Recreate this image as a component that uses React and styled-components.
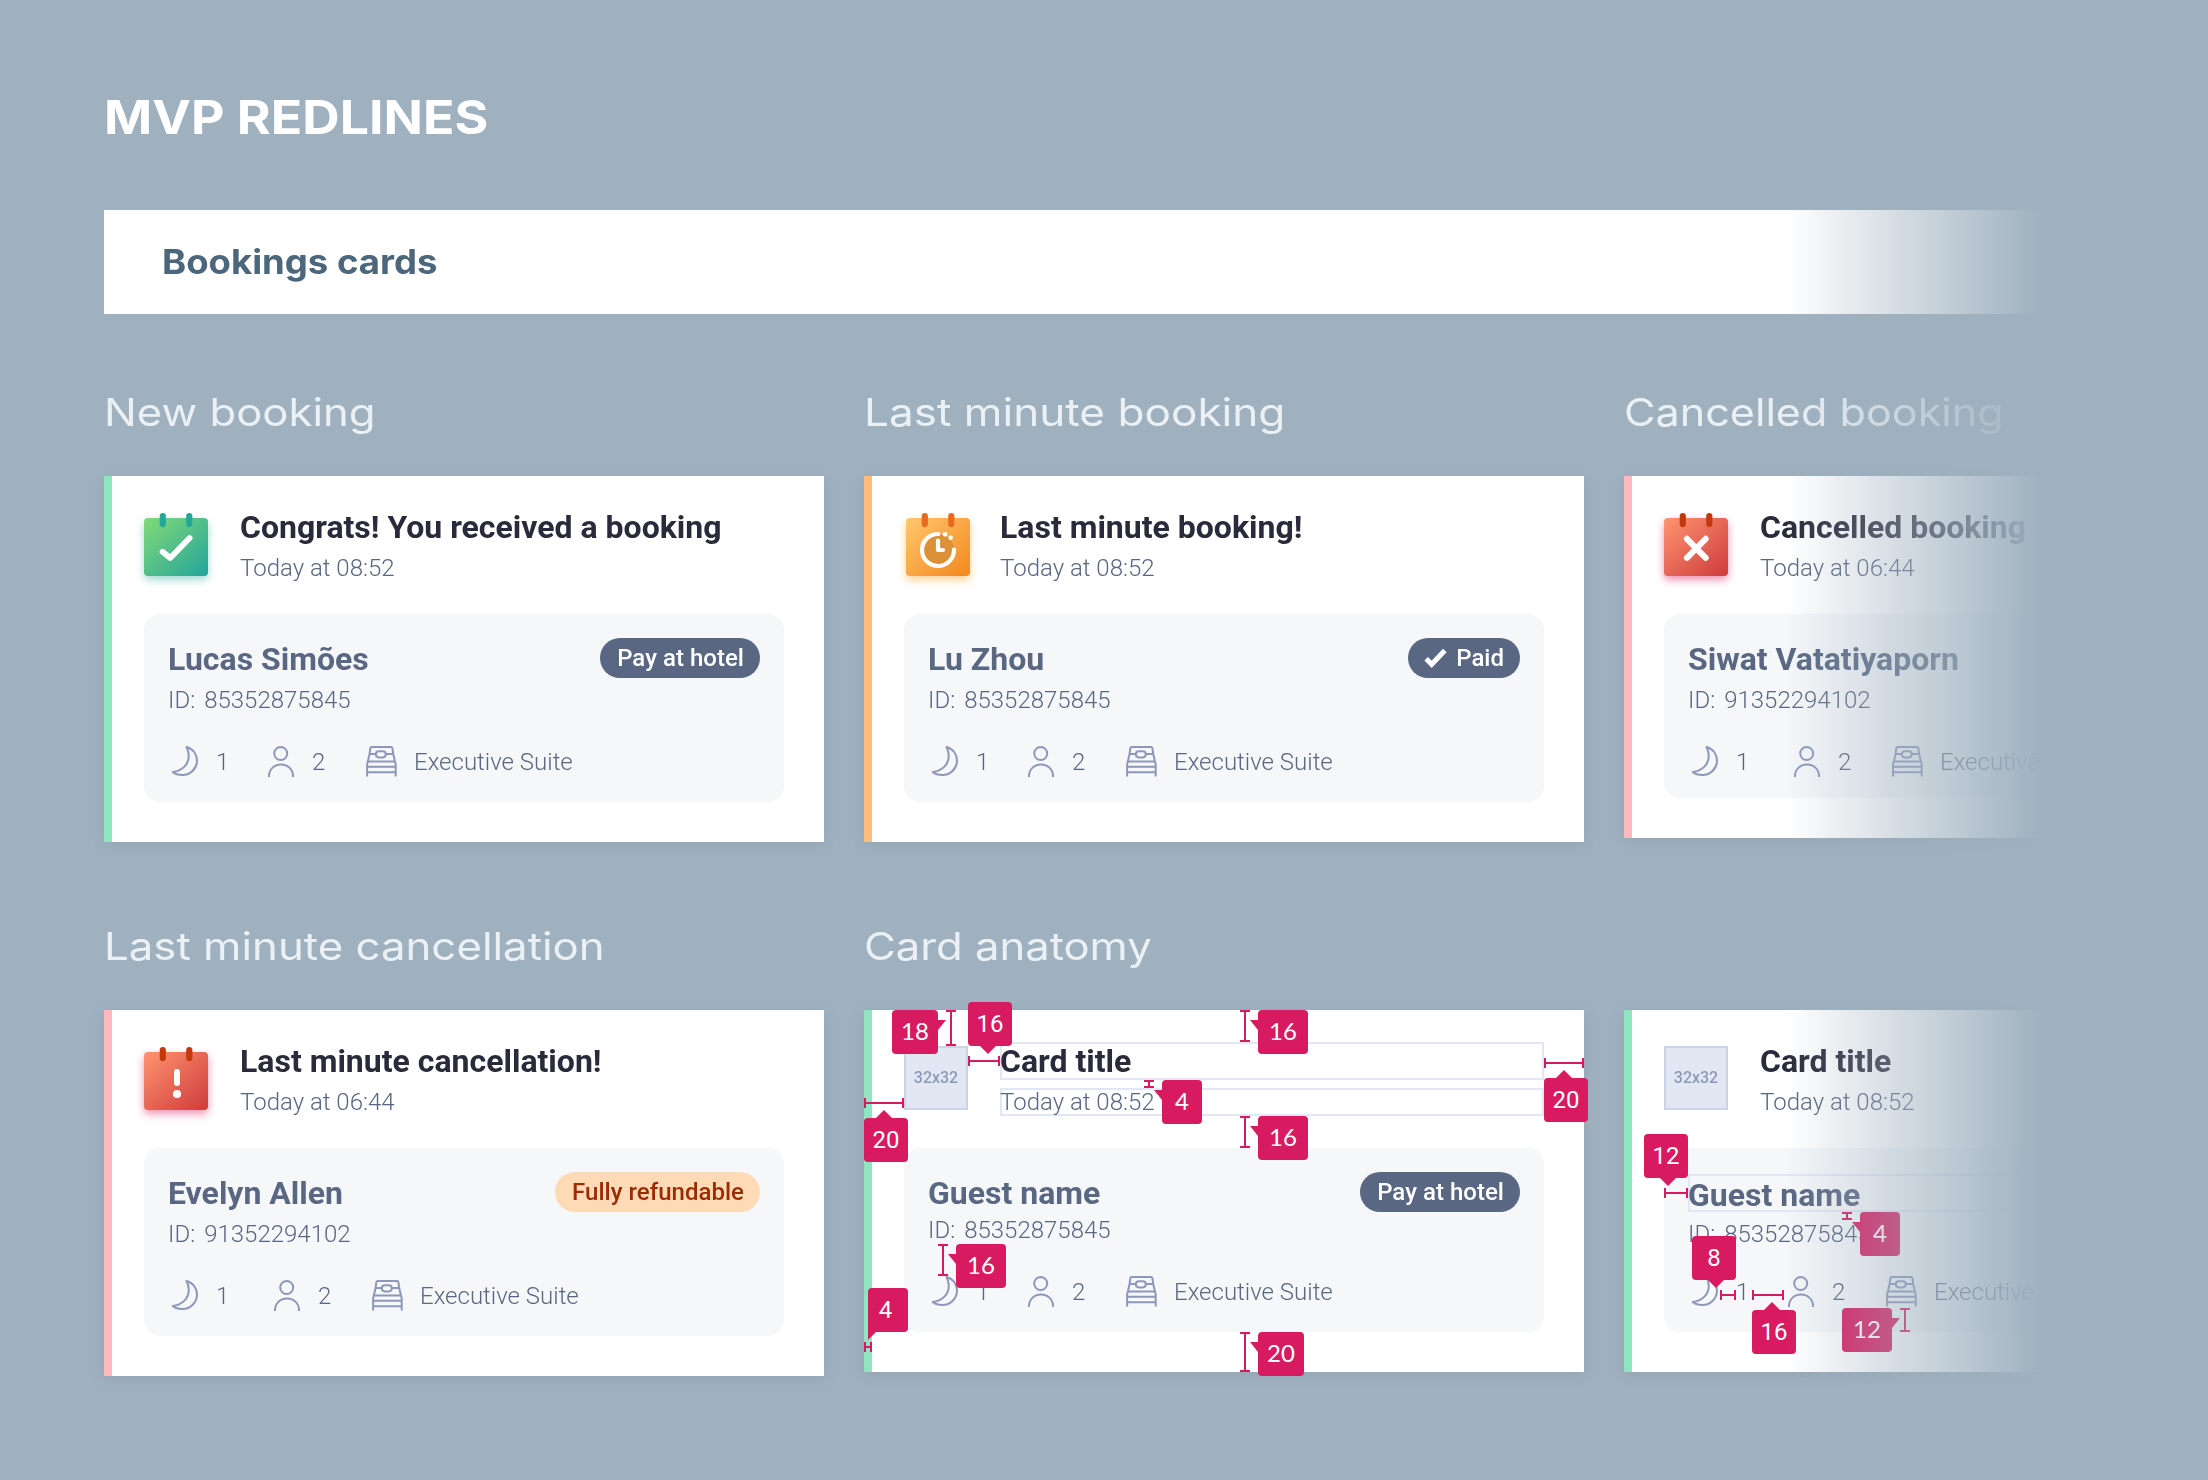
import React from "react";
import styled, { createGlobalStyle, css } from "styled-components";

const GlobalStyle = createGlobalStyle`
  *, *::before, *::after { box-sizing: border-box; }
  html, body { margin: 0; background: #9fb1bf; }
`;

const display = `Inter, "Open Sans", sans-serif`;
const body = `Roboto, "Liberation Sans", sans-serif`;

const Page = styled.main`
  width: 2208px;
  height: 1480px;
  overflow: hidden;
  background: #9fb1bf;
  font-family: ${body};
`;

const Board = styled.div`
  height: 100%;
  padding: 88px 0 0 104px;
  mask-image: linear-gradient(90deg, #000 1785px, transparent 2042px);
`;

const wide = css`
  width: max-content;
  white-space: nowrap;
  transform: scaleX(${(p) => p.$stretch});
  transform-origin: 0 50%;
`;

const PageTitle = styled.h1`
  margin: 0 0 64px;
  font: 700 47px/58px ${display};
  color: #fff;
  ${wide}
`;

const Banner = styled.header`
  display: flex;
  align-items: center;
  height: 104px;
  padding-left: 58px;
  margin-bottom: 74px;
  background: #fff;
`;

const BannerTitle = styled.h2`
  margin: 0;
  font: 700 34px/42px ${display};
  color: #4c667b;
  ${wide}
`;

const Grid = styled.div`
  display: grid;
  grid-template-columns: repeat(3, 720px);
  column-gap: 40px;
  row-gap: 80px;
  align-items: start;
`;

const Cell = styled.section`
  display: flex;
  flex-direction: column;
`;

const SectionTitle = styled.h3`
  height: 48px;
  margin: 0 0 40px;
  font: 400 38.5px/48px ${display};
  color: #ebf0f4;
  ${wide}
`;

const Card = styled.article`
  position: relative;
  padding: 32px 40px 40px 32px;
  border-left: 8px solid ${(p) => p.$accent};
  background: #fff;
  box-shadow: 0 3px 12px rgba(84, 106, 126, 0.16);
`;

const CardHead = styled.div`
  display: flex;
  height: 74px;
  margin-bottom: 32px;
`;

const Media = styled.div`
  flex: none;
  width: 64px;
  height: 64px;
  margin: 4px ${(p) => 32 - (p.$shift || 0)}px 0 ${(p) => p.$shift || 0}px;
`;

const CalendarSvg = styled.svg`
  display: block;
  overflow: visible;
`;

const CalendarBody = styled.rect`
  filter: drop-shadow(0 4px 4px ${(p) => p.$shadow});
`;

const Placeholder = styled.div`
  display: flex;
  align-items: center;
  justify-content: center;
  width: 64px;
  height: 64px;
  border: 2px solid #c9d4ea;
  background: #e2e7f4;
  font: 500 16px/18px ${body};
  color: #8f98b8;
`;

const HeadText = styled.div`
  display: flex;
  flex: 1;
  min-width: 0;
  flex-direction: column;
  gap: 8px;
`;

const outline = css`
  box-shadow: inset 0 0 0 2px #e2e7f5;
`;

const CardTitle = styled.div`
  font: 700 32px/38px ${body};
  white-space: nowrap;
  color: #2b2a3b;
  ${(p) => p.$outlined && outline}
`;

const CardTime = styled.div`
  font: 300 24px/28px ${body};
  white-space: nowrap;
  color: #596782;
  ${(p) => p.$outlined && outline}
`;

const Panel = styled.div`
  display: flex;
  flex-direction: column;
  padding: 24px 24px ${(p) => p.$bottom}px;
  border-radius: 16px;
  background: #f5f7f9;
`;

const GuestRow = styled.div`
  display: flex;
  justify-content: space-between;
  align-items: flex-start;
  height: 40px;
`;

const GuestName = styled.div`
  height: 38px;
  margin-top: 2px;
  padding-top: ${(p) => (p.$outlined ? 2 : 0)}px;
  flex: ${(p) => (p.$outlined ? 1 : "none")};
  font: 700 32px/38px ${body};
  white-space: nowrap;
  color: #596782;
  ${(p) => p.$outlined && outline}
`;

const BookingId = styled.div`
  display: flex;
  gap: 9px;
  margin: ${(p) => p.$top}px 0 ${(p) => p.$gap}px;
  font: 300 24px/28px ${body};
  color: #596782;
`;

const pillTones = {
  slate: css`
    background: #596782;
    color: #fff;
  `,
  peach: css`
    background: #ffdab7;
    color: #9b2c00;
  `,
};

const Pill = styled.span`
  display: flex;
  align-items: center;
  gap: 9px;
  height: 40px;
  padding: 0 16px 0 ${(p) => (p.$ticked ? 16 : 17)}px;
  border-radius: 20px;
  font: 500 24px/28px ${body};
  letter-spacing: ${(p) => (p.$ticked ? 0 : 0.03)}px;
  white-space: nowrap;
  ${(p) => pillTones[p.$tone]}
`;

const Details = styled.div`
  display: flex;
  height: 32px;
`;

const Detail = styled.div`
  display: flex;
  flex: none;
  align-items: center;
  gap: 16px;
  width: ${(p) => (p.$width ? `${p.$width}px` : "auto")};
  font: 300 24px/28px ${body};
  white-space: nowrap;
  color: #596782;
`;

const LineIcon = styled.svg.attrs({ width: 32, height: 32, viewBox: "0 0 32 32" })`
  flex: none;
  fill: none;
  stroke: #8d97ba;
  stroke-width: 2;
  stroke-linejoin: round;
`;

const RED = "#d81b60";

const Redline = styled.span`
  position: absolute;
  left: ${(p) => p.$x - 8}px;
  top: ${(p) => p.$y}px;
  width: ${(p) => (p.$vertical ? 10 : p.$size)}px;
  height: ${(p) => (p.$vertical ? p.$size : 10)}px;
  border: solid ${RED};
  border-width: ${(p) => (p.$vertical ? "2px 0" : "0 2px")};
  &::before {
    content: "";
    position: absolute;
    background: ${RED};
    ${(p) =>
      p.$vertical
        ? "left: 4px; top: 0; bottom: 0; width: 2px;"
        : "top: 4px; left: 0; right: 0; height: 2px;"}
  }
`;

const pointers = {
  left: "left: -8px; top: 10px; width: 8px; height: 10px; clip-path: polygon(0 0, 100% 0, 100% 100%);",
  right: "right: -8px; top: 10px; width: 8px; height: 10px; clip-path: polygon(0 0, 100% 0, 0 100%);",
  corner: "left: 0; bottom: -8px; width: 8px; height: 12px; clip-path: polygon(0 0, 100% 33%, 0 100%);",
};

const pointer = (p) => {
  if (p.$dir === "down")
    return `left: ${p.$tip - 8}px; bottom: -8px; width: 16px; height: 8px; clip-path: polygon(0 0, 100% 0, 50% 100%);`;
  if (p.$dir === "up")
    return `left: ${p.$tip - 8}px; top: -8px; width: 16px; height: 8px; clip-path: polygon(0 100%, 100% 100%, 50% 0);`;
  return pointers[p.$dir];
};

const Tag = styled.span`
  position: absolute;
  left: ${(p) => p.$x - 8}px;
  top: ${(p) => p.$y}px;
  display: flex;
  align-items: center;
  justify-content: center;
  width: ${(p) => p.$w}px;
  height: 44px;
  padding-right: ${(p) => (p.$dir === "corner" ? 5 : 0)}px;
  padding-bottom: ${(p) => (p.$side ? 2 : 0)}px;
  border-radius: 4px;
  background: ${RED};
  font: 400 24px/28px ${(p) => (p.$side ? "Lato, sans-serif" : body)};
  color: #fff;
  &::after {
    content: "";
    position: absolute;
    background: ${RED};
    ${pointer}
  }
`;

const calendars = {
  green: { from: "#82da77", to: "#23a49b", tab: "#26a69a", shadow: "rgba(38,166,154,.42)" },
  orange: { from: "#ffc76f", to: "#f4871c", tab: "#e8691f", shadow: "rgba(255,160,40,.5)" },
  red: { from: "#ff9470", to: "#cd3b3c", tab: "#c4390b", shadow: "rgba(216,27,96,.48)" },
};

const glyphs = {
  check: (
    <path d="M18.6 39.8 26.2 46 45.6 26.1" fill="none" stroke="#fff" strokeWidth="5.8" strokeLinecap="round" strokeLinejoin="round" />
  ),
  cross: (
    <path d="M22.9 26.8 41.7 45.9M41.7 26.8 22.9 45.9" stroke="#fff" strokeWidth="6" strokeLinecap="round" />
  ),
  alert: (
    <g fill="#fff">
      <rect x="30" y="23" width="6" height="17" rx="3" />
      <circle cx="33" cy="48" r="4.1" />
    </g>
  ),
  clock: (
    <g>
      <circle cx="32" cy="38" r="16" fill="#dd9136" />
      <path d="M32.4 22A16 16 0 1 0 48 37.6" fill="none" stroke="#fff" strokeWidth="4.2" strokeLinecap="round" />
      <path d="M32 28.6V38h5" fill="none" stroke="#fff" strokeWidth="4.2" strokeLinecap="round" strokeLinejoin="round" />
      <circle cx="39" cy="22.3" r="2.4" fill="#fff" />
      <circle cx="44.7" cy="25.8" r="2.3" fill="#fff" />
    </g>
  ),
};

function Calendar({ tone, glyph }) {
  const c = calendars[tone];
  const id = `calendar-${glyph}`;
  return (
    <CalendarSvg width="64" height="64" viewBox="0 0 64 64">
      <defs>
        <linearGradient id={id} x1="0" y1="0" x2="1" y2="1">
          <stop offset="0" stopColor={c.from} />
          <stop offset="1" stopColor={c.to} />
        </linearGradient>
      </defs>
      <CalendarBody $shadow={c.shadow} y="6" width="64" height="58" rx="4" fill={`url(#${id})`} />
      <rect x="15.7" y="1" width="6.2" height="14.2" rx="3.1" fill={c.tab} />
      <rect x="42.2" y="1" width="6.2" height="14.2" rx="3.1" fill={c.tab} />
      {glyphs[glyph]}
    </CalendarSvg>
  );
}

const Moon = () => (
  <LineIcon>
    <path d="M18.4 1C25 2.5 29 8.3 29 14.5C29 22.5 22.5 29 14.5 29C10.8 29 7.2 28.2 4.8 26C14.5 24.6 20.8 18.5 20.8 9.8C20.8 6.5 20.1 3.8 18.4 1Z" />
  </LineIcon>
);

const Person = () => (
  <LineIcon>
    <circle cx="16.7" cy="7.5" r="6.5" />
    <path d="M5 31V30C5 23.5 10 18.6 17 18.6S29 23.5 29 30V31" />
  </LineIcon>
);

const Bed = () => (
  <LineIcon>
    <path d="M1.1 30.5V18.5L3.6 8 4.3 2.2Q4.5 1 5.7 1H25Q26.2 1 26.4 2.2L27.2 8 29.7 18.5V30.5" />
    <path d="M3.6 8H9.5M20 8H27M2 15.6H29M1.1 20.8H29.7M1.1 26.3H29.7" />
    <rect x="9.8" y="5.2" width="10" height="6.2" rx="3.1" />
  </LineIcon>
);

const Tick = () => (
  <svg width="23" height="20" viewBox="0 0 23 20">
    <path d="M2.2 10.8 7.7 16.3 20.8 2.5" fill="none" stroke="#fff" strokeWidth="5" />
  </svg>
);

const anatomyMarks = {
  lines: [
    [82, 0, 36, true],
    [104, 46, 32],
    [0, 88, 40],
    [280, 70, 8, true],
    [74, 234, 32, true],
    [0, 332, 8],
    [376, 0, 32, true],
    [376, 106, 32, true],
    [376, 322, 40, true],
    [680, 48, 40],
  ],
  tags: [
    [28, 0, 46, "18", "right"],
    [104, -8, 44, "16", "down", 20],
    [0, 108, 44, "20", "up", 20],
    [298, 70, 40, "4", "left"],
    [92, 234, 50, "16", "left"],
    [4, 278, 40, "4", "corner"],
    [394, 0, 50, "16", "left"],
    [394, 106, 50, "16", "left"],
    [394, 322, 46, "20", "left"],
    [680, 68, 44, "20", "up", 20],
  ],
};

const guestMarks = {
  lines: [
    [40, 178, 24],
    [218, 202, 8, true],
    [96, 280, 16],
    [128, 280, 32],
    [276, 298, 24, true],
  ],
  tags: [
    [20, 124, 44, "12", "down", 24],
    [236, 202, 40, "4", "left"],
    [68, 226, 44, "8", "down", 24],
    [128, 300, 44, "16", "up", 20],
    [218, 298, 50, "12", "right"],
  ],
};

function Marks({ lines, tags }) {
  return (
    <>
      {lines.map(([x, y, size, vertical]) => (
        <Redline key={`${x}-${y}`} $x={x} $y={y} $size={size} $vertical={vertical} />
      ))}
      {tags.map(([x, y, w, label, dir, tip]) => (
        <Tag key={`${x}-${y}`} $x={x} $y={y} $w={w} $dir={dir} $tip={tip} $side={dir === "left" || dir === "right"}>
          {label}
        </Tag>
      ))}
    </>
  );
}

const cards = [
  {
    heading: "New booking", stretch: 1.133, accent: "#8fe5bf", tone: "green", glyph: "check",
    title: "Congrats! You received a booking", time: "Today at 08:52",
    name: "Lucas Simões", id: "85352875845", pill: "Pay at hotel",
  },
  {
    heading: "Last minute booking", stretch: 1.146, accent: "#ffbc7d", tone: "orange", glyph: "clock", shift: 2,
    title: "Last minute booking!", time: "Today at 08:52",
    name: "Lu Zhou", id: "85352875845", pill: "Paid", ticked: true,
  },
  {
    heading: "Cancelled booking", stretch: 1.12, accent: "#ffb9bc", tone: "red", glyph: "cross",
    title: "Cancelled booking", time: "Today at 06:44",
    name: "Siwat Vatatiyaporn", id: "91352294102", night: 102, bottom: 20, room: "Executive",
  },
  {
    heading: "Last minute cancellation", stretch: 1.137, accent: "#ffb9bc", tone: "red", glyph: "alert",
    title: "Last minute cancellation!", time: "Today at 06:44",
    name: "Evelyn Allen", id: "91352294102", pill: "Fully refundable", pillTone: "peach", night: 102,
  },
  {
    heading: "Card anatomy", stretch: 1.132, accent: "#8fe5bf",
    title: "Card title", time: "Today at 08:52", outlined: true,
    name: "Guest name", id: "85352875845", pill: "Pay at hotel", idTop: 4, marks: anatomyMarks,
  },
  {
    heading: "", stretch: 1, accent: "#8fe5bf",
    title: "Card title", time: "Today at 08:52", nameOutlined: true,
    name: "Guest name", id: "85352875845", idGap: 28, room: "Executive", marks: guestMarks,
  },
];

function BookingCard({ data }) {
  const d = data;
  return (
    <Card $accent={d.accent}>
      <CardHead>
        <Media $shift={d.shift}>
          {d.tone ? <Calendar tone={d.tone} glyph={d.glyph} /> : <Placeholder>32x32</Placeholder>}
        </Media>
        <HeadText>
          <CardTitle $outlined={d.outlined}>{d.title}</CardTitle>
          <CardTime $outlined={d.outlined}>{d.time}</CardTime>
        </HeadText>
      </CardHead>
      <Panel $bottom={d.bottom || 24}>
        <GuestRow>
          <GuestName $outlined={d.nameOutlined}>{d.name}</GuestName>
          {d.pill && (
            <Pill $tone={d.pillTone || "slate"} $ticked={d.ticked}>
              {d.ticked && <Tick />}
              {d.pill}
            </Pill>
          )}
        </GuestRow>
        <BookingId $top={d.idTop || 8} $gap={d.idGap || 32}>
          <span>ID:</span>
          <span>{d.id}</span>
        </BookingId>
        <Details>
          <Detail $width={d.night || 96}><Moon />1</Detail>
          <Detail $width={102}><Person />2</Detail>
          <Detail><Bed />{d.room || "Executive Suite"}</Detail>
        </Details>
      </Panel>
      {d.marks && <Marks {...d.marks} />}
    </Card>
  );
}

export default function App() {
  return (
    <>
      <GlobalStyle />
      <Page>
        <Board>
          <PageTitle $stretch={1.102}>MVP REDLINES</PageTitle>
          <Banner>
            <BannerTitle $stretch={1.074}>Bookings cards</BannerTitle>
          </Banner>
          <Grid>
            {cards.map((card, i) => (
              <Cell key={i}>
                <SectionTitle $stretch={card.stretch}>{card.heading}</SectionTitle>
                <BookingCard data={card} />
              </Cell>
            ))}
          </Grid>
        </Board>
      </Page>
    </>
  );
}
